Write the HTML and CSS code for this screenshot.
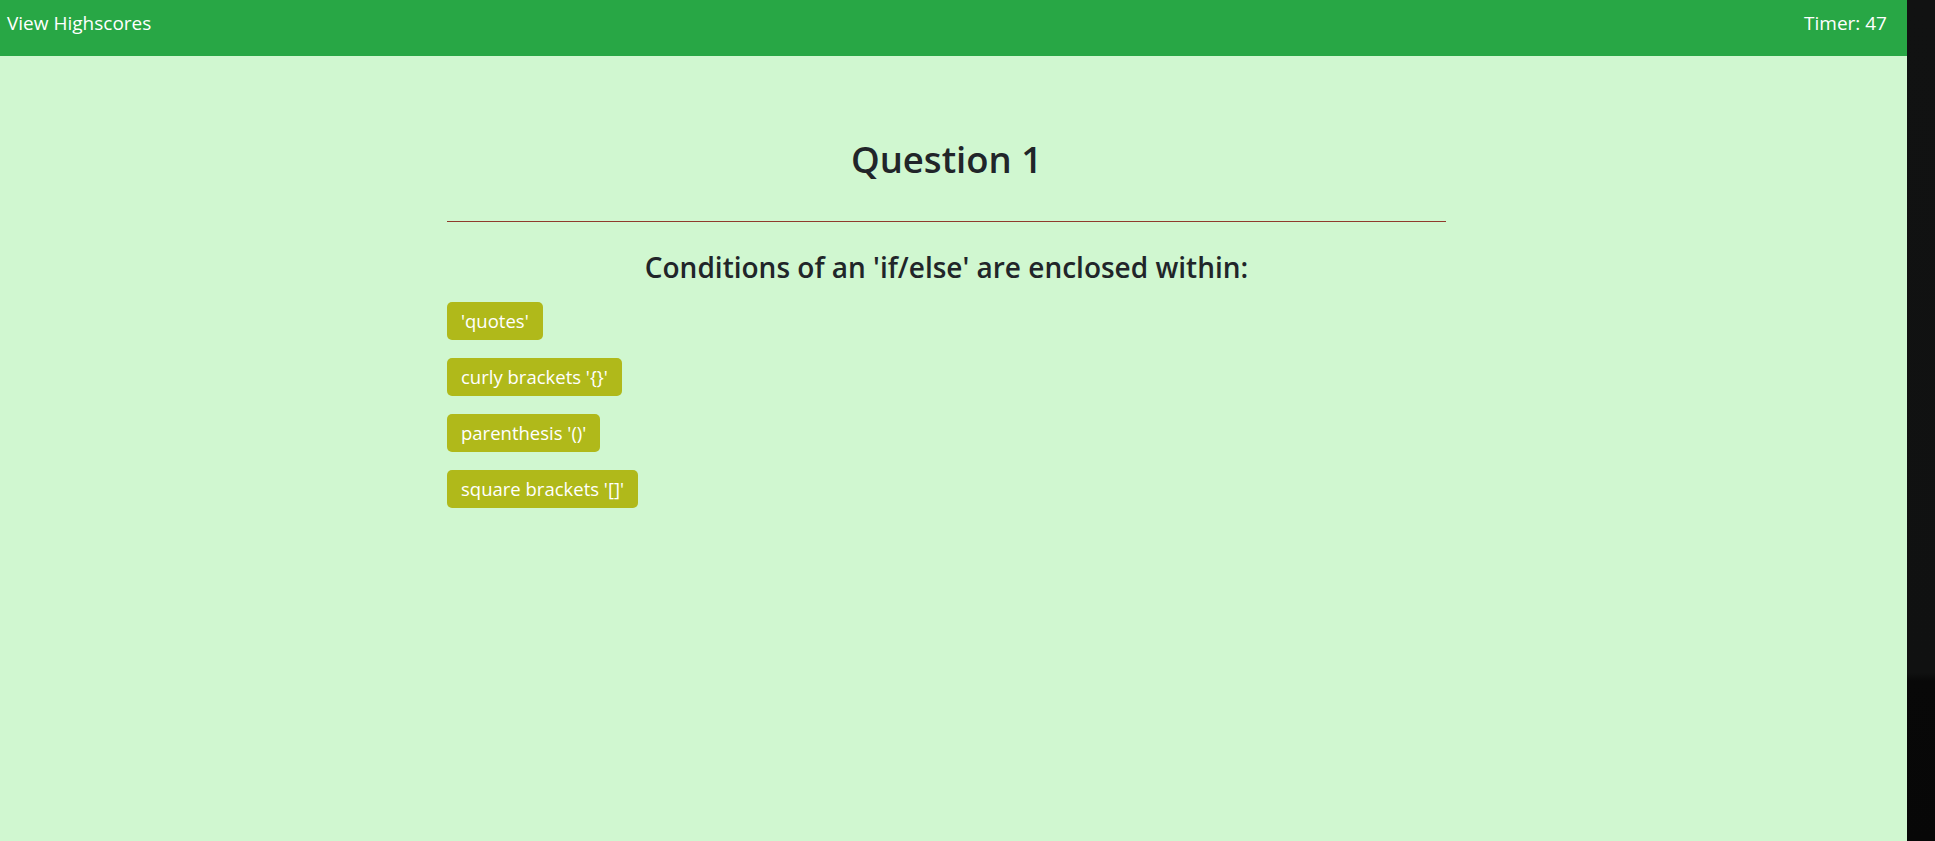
FILE: index.html
```html
<!DOCTYPE html>
<html lang="en">
<head>
<meta charset="utf-8">
<title>Code Quiz</title>
<link rel="stylesheet" href="styles.css">
</head>
<body>
<div class="app">
  <div class="page">
    <header class="topbar">
      <a class="highscores" href="#">View Highscores</a>
      <span class="timer">Timer: 47</span>
    </header>
    <main class="quiz">
      <h1 class="question-number">Question 1</h1>
      <hr class="divider">
      <h3 class="question-text">Conditions of an 'if/else' are enclosed within:</h3>
      <div class="choices">
        <button class="choice">'quotes'</button>
        <button class="choice">curly brackets '{}'</button>
        <button class="choice">parenthesis '()'</button>
        <button class="choice">square brackets '[]'</button>
      </div>
    </main>
  </div>
  <div class="desktop-edge"></div>
</div>
</body>
</html>
```

FILE: styles.css
```css
* { box-sizing: border-box; }

html, body {
  margin: 0;
  padding: 0;
  height: 100%;
}

body {
  font-family: "Open Sans", "Noto Sans", sans-serif;
  color: #212529;
  overflow: hidden;
}

.app {
  display: flex;
  height: 841px;
}

.page {
  flex: 1;
  display: flex;
  flex-direction: column;
  background: #d0f7d0;
}

.desktop-edge {
  width: 28px;
  background: linear-gradient(to bottom, #111212 0%, #101111 80%, #080808 81%, #070707 100%);
}

.topbar {
  height: 56px;
  background: #28a745;
  display: flex;
  justify-content: space-between;
  align-items: flex-start;
  padding: 8px 20px 0 7px;
  font-size: 19px;
  line-height: 30px;
  color: #ffffff;
}

.highscores {
  color: #ffffff;
  text-decoration: none;
}

.quiz {
  width: 999px;
  margin: 0 auto;
  padding-top: 79px;
  position: relative;
  left: -7px;
}

.question-number {
  margin: 0;
  text-align: center;
  font-size: 36.5px;
  font-weight: 600;
  line-height: 48px;
}

.divider {
  margin: 38px 0 0;
  border: 0;
  border-top: 1px solid #8f3b2c;
  height: 0;
}

.question-text {
  margin: 28px 0 0;
  text-align: center;
  font-size: 28px;
  font-weight: 600;
  line-height: 34px;
}

.choices {
  display: flex;
  flex-direction: column;
  align-items: flex-start;
  gap: 18px;
  margin-top: 18px;
}

.choice {
  font-family: inherit;
  font-size: 18.5px;
  line-height: 24px;
  padding: 7px 14px;
  height: 38px;
  color: #ffffff;
  background: #b0b91a;
  border: 0;
  border-radius: 5px;
  cursor: pointer;
}
```
